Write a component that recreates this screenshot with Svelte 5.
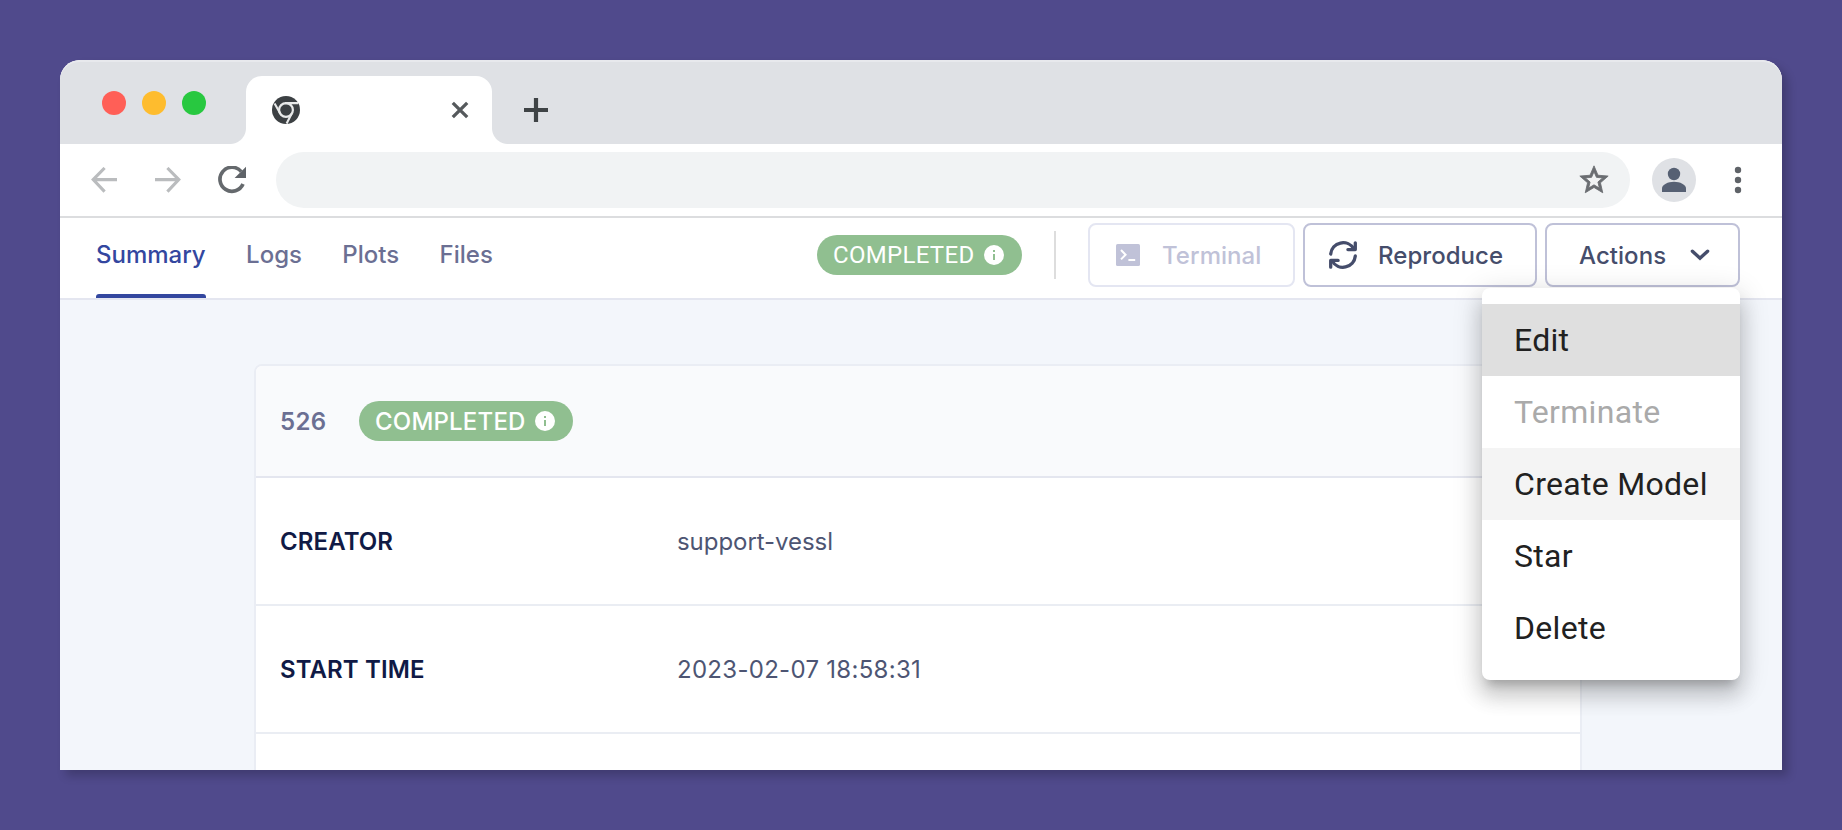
<script>
  const tabs = ['Summary', 'Logs', 'Plots', 'Files'];
  const rows = [
    { label: 'CREATOR', value: 'support-vessl', kind: 'text' },
    { label: 'START TIME', value: '2023-02-07 18:58:31', kind: 'date' },
  ];
  const actions = [
    { label: 'Edit', state: 'focused' },
    { label: 'Terminate', state: 'disabled' },
    { label: 'Create Model', state: 'hovered' },
    { label: 'Star', state: '' },
    { label: 'Delete', state: '' },
  ];
</script>

{#snippet info()}
  <svg class="info" width="20" height="20" viewBox="0 0 20 20">
    <circle cx="10" cy="10" r="10" fill="#fff" />
    <path d="M9 5h2v2H9zM9 9h2v6H9z" fill="#90bf90" />
  </svg>
{/snippet}

<div class="desktop">
  <div class="window">
    <div class="strip">
      <div class="lights">
        <i class="red"></i><i class="yellow"></i><i class="green"></i>
      </div>
      <div class="tab">
        <svg width="28" height="28" viewBox="0 0 28 28">
          <circle cx="14" cy="14" r="14" fill="#3c4043" />
          <circle cx="14" cy="14" r="6.9" fill="none" stroke="#e8e9e9" stroke-width="2.2" />
          <path d="M13 7.1H26.2M8.4 17.8L2.6 7.4M19.6 17.8L14.6 27.6" stroke="#e8e9e9" stroke-width="2.1" />
        </svg>
        <svg width="18" height="18" viewBox="0 0 18 18">
          <path d="M1.8 1.8l14.4 14.4M16.2 1.8L1.8 16.2" stroke="#55595c" stroke-width="3.3" />
        </svg>
      </div>
      <svg class="plus" width="24" height="24" viewBox="0 0 24 24">
        <path d="M12 0v24M0 12h24" stroke="#3f4346" stroke-width="4.2" />
      </svg>
    </div>

    <div class="toolbar">
      <svg width="26" height="26" viewBox="0 0 26 26" fill="none" stroke="#babcbe" stroke-width="3.1">
        <path d="M26 12.6H2M13.6 1L2.2 12.6l11.4 12" />
      </svg>
      <svg class="forward" width="26" height="26" viewBox="0 0 26 26" fill="none" stroke="#babcbe" stroke-width="3.1">
        <path d="M0 12.6h24M12.4 1l11.4 11.6-11.4 12" />
      </svg>
      <svg class="reload" width="28" height="28" viewBox="0 0 28 28">
        <path d="M23.2 5.6A12 12 0 1 0 25 18" fill="none" stroke="#65696d" stroke-width="3.7" />
        <path d="M28 .8V12H16.6z" fill="#5f6368" />
      </svg>
      <div class="omnibox">
        <svg width="30" height="30" viewBox="0 0 24 24">
          <path
            d="M22 9.24l-7.19-.62L12 2 9.19 8.63 2 9.24l5.46 4.73L5.82 21 12 17.27 18.18 21l-1.63-7.03L22 9.24zM12 15.4l-3.76 2.27 1-4.28-3.32-2.88 4.38-.38L12 6.1l1.71 4.04 4.38.38-3.32 2.88 1 4.28L12 15.4z"
            fill="#6a6d71" stroke="#6a6d71" stroke-width=".6" />
        </svg>
      </div>
      <svg class="avatar" width="44" height="44" viewBox="0 0 44 44">
        <circle cx="22" cy="22" r="22" fill="#dfe1e5" />
        <circle cx="22" cy="16" r="6.2" fill="#566073" />
        <path d="M10 34v-3.4c0-4 6-6.8 12-6.8s12 2.8 12 6.8V34z" fill="#566073" />
      </svg>
      <svg class="dots" width="8" height="28" viewBox="0 0 8 28" fill="#5f6368">
        <circle cx="4" cy="4" r="3.2" /><circle cx="4" cy="14" r="3.2" /><circle cx="4" cy="24" r="3.2" />
      </svg>
    </div>

    <nav>
      {#each tabs as tab, i}
        <a class:active={i === 0}>{tab}</a>
      {/each}
      <div class="controls">
        <span class="badge">COMPLETED {@render info()}</span>
        <span class="divider"></span>
        <button class="terminal" disabled>
          <svg width="24" height="22" viewBox="0 0 24 22">
            <rect width="24" height="22" rx="1.6" fill="#c0c2d8" />
            <path d="M5 6l4.6 4.7L5 15.4M12.4 16h6.8" fill="none" stroke="#fff" stroke-width="2" />
          </svg>
          <span>Terminal</span>
        </button>
        <button class="reproduce">
          <svg width="28" height="28" viewBox="0 0 28 28" fill="none" stroke="#454d6b" stroke-width="3.3" stroke-linecap="round" stroke-linejoin="round">
            <path d="M1.7 13A12.4 12.4 0 0 1 24.8 8M26.3 15A12.4 12.4 0 0 1 3.2 20" />
            <path d="M26.3 1.8v6.8h-7.4M1.7 26.2v-6.8h7.4" />
          </svg>
          <span>Reproduce</span>
        </button>
        <div class="menu-anchor">
          <button class="actions">
            <span>Actions</span>
            <svg width="20" height="12" viewBox="0 0 20 12">
              <path d="M2.4 2.2l7.6 7 7.6-7" fill="none" stroke="#454d6b" stroke-width="3.4" stroke-linecap="round" />
            </svg>
          </button>
          <ul class="menu">
            {#each actions as action}
              <li class={action.state}>{action.label}</li>
            {/each}
          </ul>
        </div>
      </div>
    </nav>

    <main>
      <section>
        <header>
          <strong>526</strong>
          <span class="badge medium">COMPLETED {@render info()}</span>
        </header>
        {#each rows as row}
          <div class="row">
            <span class="label">{row.label}</span>
            <span class="value {row.kind}">{row.value}</span>
          </div>
        {/each}
      </section>
    </main>
  </div>
</div>

<style>
  * {
    box-sizing: border-box;
  }
  svg {
    display: block;
    flex: none;
  }
  .desktop {
    height: 830px;
    padding: 60px;
    background: #504a8c;
    overflow: hidden;
    font-family: Inter, sans-serif;
    font-size: 24px;
  }
  .window {
    width: 1722px;
    height: 710px;
    display: flex;
    flex-direction: column;
    border-radius: 20px 20px 0 0;
    background: #fff;
    box-shadow: 6px 6px 10px rgba(0, 0, 0, 0.2);
  }
  .strip {
    height: 84px;
    flex: none;
    display: flex;
    align-items: flex-end;
    background: #dfe1e5;
    border-radius: 20px 20px 0 0;
    border-top: 2px solid #e8e9ed;
  }
  .lights {
    width: 186px;
    height: 84px;
    padding: 31px 0 0 42px;
    display: flex;
    gap: 16px;
  }
  .lights i {
    width: 24px;
    height: 24px;
    border-radius: 50%;
  }
  .red {
    background: #ff5f57;
  }
  .yellow {
    background: #febc2e;
  }
  .green {
    background: #28c840;
  }
  .tab {
    position: relative;
    width: 246px;
    height: 68px;
    padding: 0 23px 0 26px;
    display: flex;
    align-items: center;
    justify-content: space-between;
    background: #fff;
    border-radius: 16px 16px 0 0;
  }
  .tab::before,
  .tab::after {
    content: '';
    position: absolute;
    bottom: 0;
    width: 16px;
    height: 16px;
  }
  .tab::before {
    left: -16px;
    background: radial-gradient(circle at 0 0, transparent 15.5px, #fff 16.5px);
  }
  .tab::after {
    right: -16px;
    background: radial-gradient(circle at 100% 0, transparent 15.5px, #fff 16.5px);
  }
  .plus {
    margin: 0 0 22px 32px;
  }
  .toolbar {
    height: 74px;
    flex: none;
    display: flex;
    align-items: center;
    padding: 0 40px 0 31px;
    border-bottom: 2px solid #dcdddf;
  }
  .forward {
    margin-left: 38px;
  }
  .reload {
    margin-left: 37px;
  }
  .omnibox {
    width: 1354px;
    height: 56px;
    margin-left: 30px;
    padding: 0 21px;
    display: flex;
    align-items: center;
    justify-content: flex-end;
    border-radius: 28px;
    background: #f1f3f4;
  }
  .omnibox svg {
    width: 34px;
    height: 34px;
    margin-right: -2px;
  }
  .avatar {
    margin-left: 22px;
  }
  .dots {
    margin-left: 38px;
  }
  nav {
    height: 82px;
    flex: none;
    display: flex;
    padding: 0 42px 0 36px;
    border-bottom: 2px solid #e4e6f0;
    font-weight: 500;
  }
  a {
    height: 80px;
    margin-right: 40.4px;
    line-height: 73px;
    color: #6b6f93;
  }
  a.active {
    position: relative;
    color: #33479f;
  }
  a.active::after {
    content: '';
    position: absolute;
    left: 0;
    right: 0;
    bottom: 0;
    height: 4px;
    border-radius: 3px 3px 0 0;
    background: #33479f;
  }
  .controls {
    margin-left: auto;
    height: 74px;
    display: flex;
    align-items: center;
  }
  .badge {
    height: 40px;
    width: 205px;
    padding: 0 18px 0 16px;
    display: flex;
    align-items: center;
    justify-content: space-between;
    border-radius: 20px;
    background: #90bf90;
    color: #fff;
    font: 400 24px Roboto, sans-serif;
    letter-spacing: 0.3px;
  }
  .divider {
    width: 2px;
    height: 48px;
    margin: 0 32px;
    background: #ddd;
  }
  button {
    height: 64px;
    padding: 0;
    display: flex;
    align-items: center;
    border: 2px solid #bfc1d8;
    border-radius: 8px;
    background: #fff;
    color: #454d6b;
    font: inherit;
    letter-spacing: 0.05px;
  }
  .terminal {
    width: 207px;
    padding-left: 26px;
    border-color: #e4e6f2;
    color: #c0c2d8;
  }
  .terminal span {
    margin-left: 22px;
  }
  .reproduce {
    width: 234px;
    margin: 0 8px;
    padding-left: 24px;
  }
  .reproduce span {
    margin-left: 21px;
  }
  .menu-anchor {
    position: relative;
  }
  .actions {
    width: 195px;
    padding: 0 28px 0 32px;
    justify-content: space-between;
  }
  .menu {
    position: absolute;
    z-index: 1;
    top: 65px;
    right: 0;
    width: 258px;
    height: 392px;
    margin: 0;
    padding: 16px 0;
    list-style: none;
    background: #fff;
    border-radius: 8px;
    box-shadow:
      0 10px 10px -6px rgba(0, 0, 0, 0.2),
      0 16px 20px 2px rgba(0, 0, 0, 0.14),
      0 6px 28px 4px rgba(0, 0, 0, 0.12);
    font: 400 32px Roboto, sans-serif;
    letter-spacing: 0.3px;
    color: #212121;
    white-space: nowrap;
  }
  li {
    height: 72px;
    padding-left: 32px;
    line-height: 72px;
  }
  .focused {
    background: #dfdfdf;
  }
  .disabled {
    color: #aaa;
  }
  .hovered {
    background: #f4f4f4;
  }
  main {
    flex: 1;
    padding: 64px 200px 0 194px;
    background: #f3f6fb;
    overflow: hidden;
  }
  section {
    height: 500px;
    border: 2px solid #eaedf4;
    border-radius: 8px;
    background: #fff;
  }
  header {
    height: 112px;
    display: flex;
    align-items: center;
    padding: 0 24px;
    background: #f9fafc;
    border-bottom: 2px solid #e4e6ef;
    border-radius: 6px 6px 0 0;
  }
  strong {
    width: 79px;
    font-weight: 600;
    letter-spacing: 0.4px;
    color: #6b6f93;
  }
  .badge.medium {
    width: 214px;
    font: 500 24px Inter, sans-serif;
    letter-spacing: 0.2px;
  }
  .row {
    height: 128px;
    display: flex;
    align-items: center;
    padding: 0 24px;
    border-bottom: 2px solid #eaedf3;
  }
  .label {
    width: 397px;
    font-weight: 600;
    letter-spacing: 0.1px;
    color: #101a45;
  }
  .value {
    color: #4d5573;
    letter-spacing: -0.05px;
  }
  .value.date {
    letter-spacing: 0.29px;
  }
</style>
